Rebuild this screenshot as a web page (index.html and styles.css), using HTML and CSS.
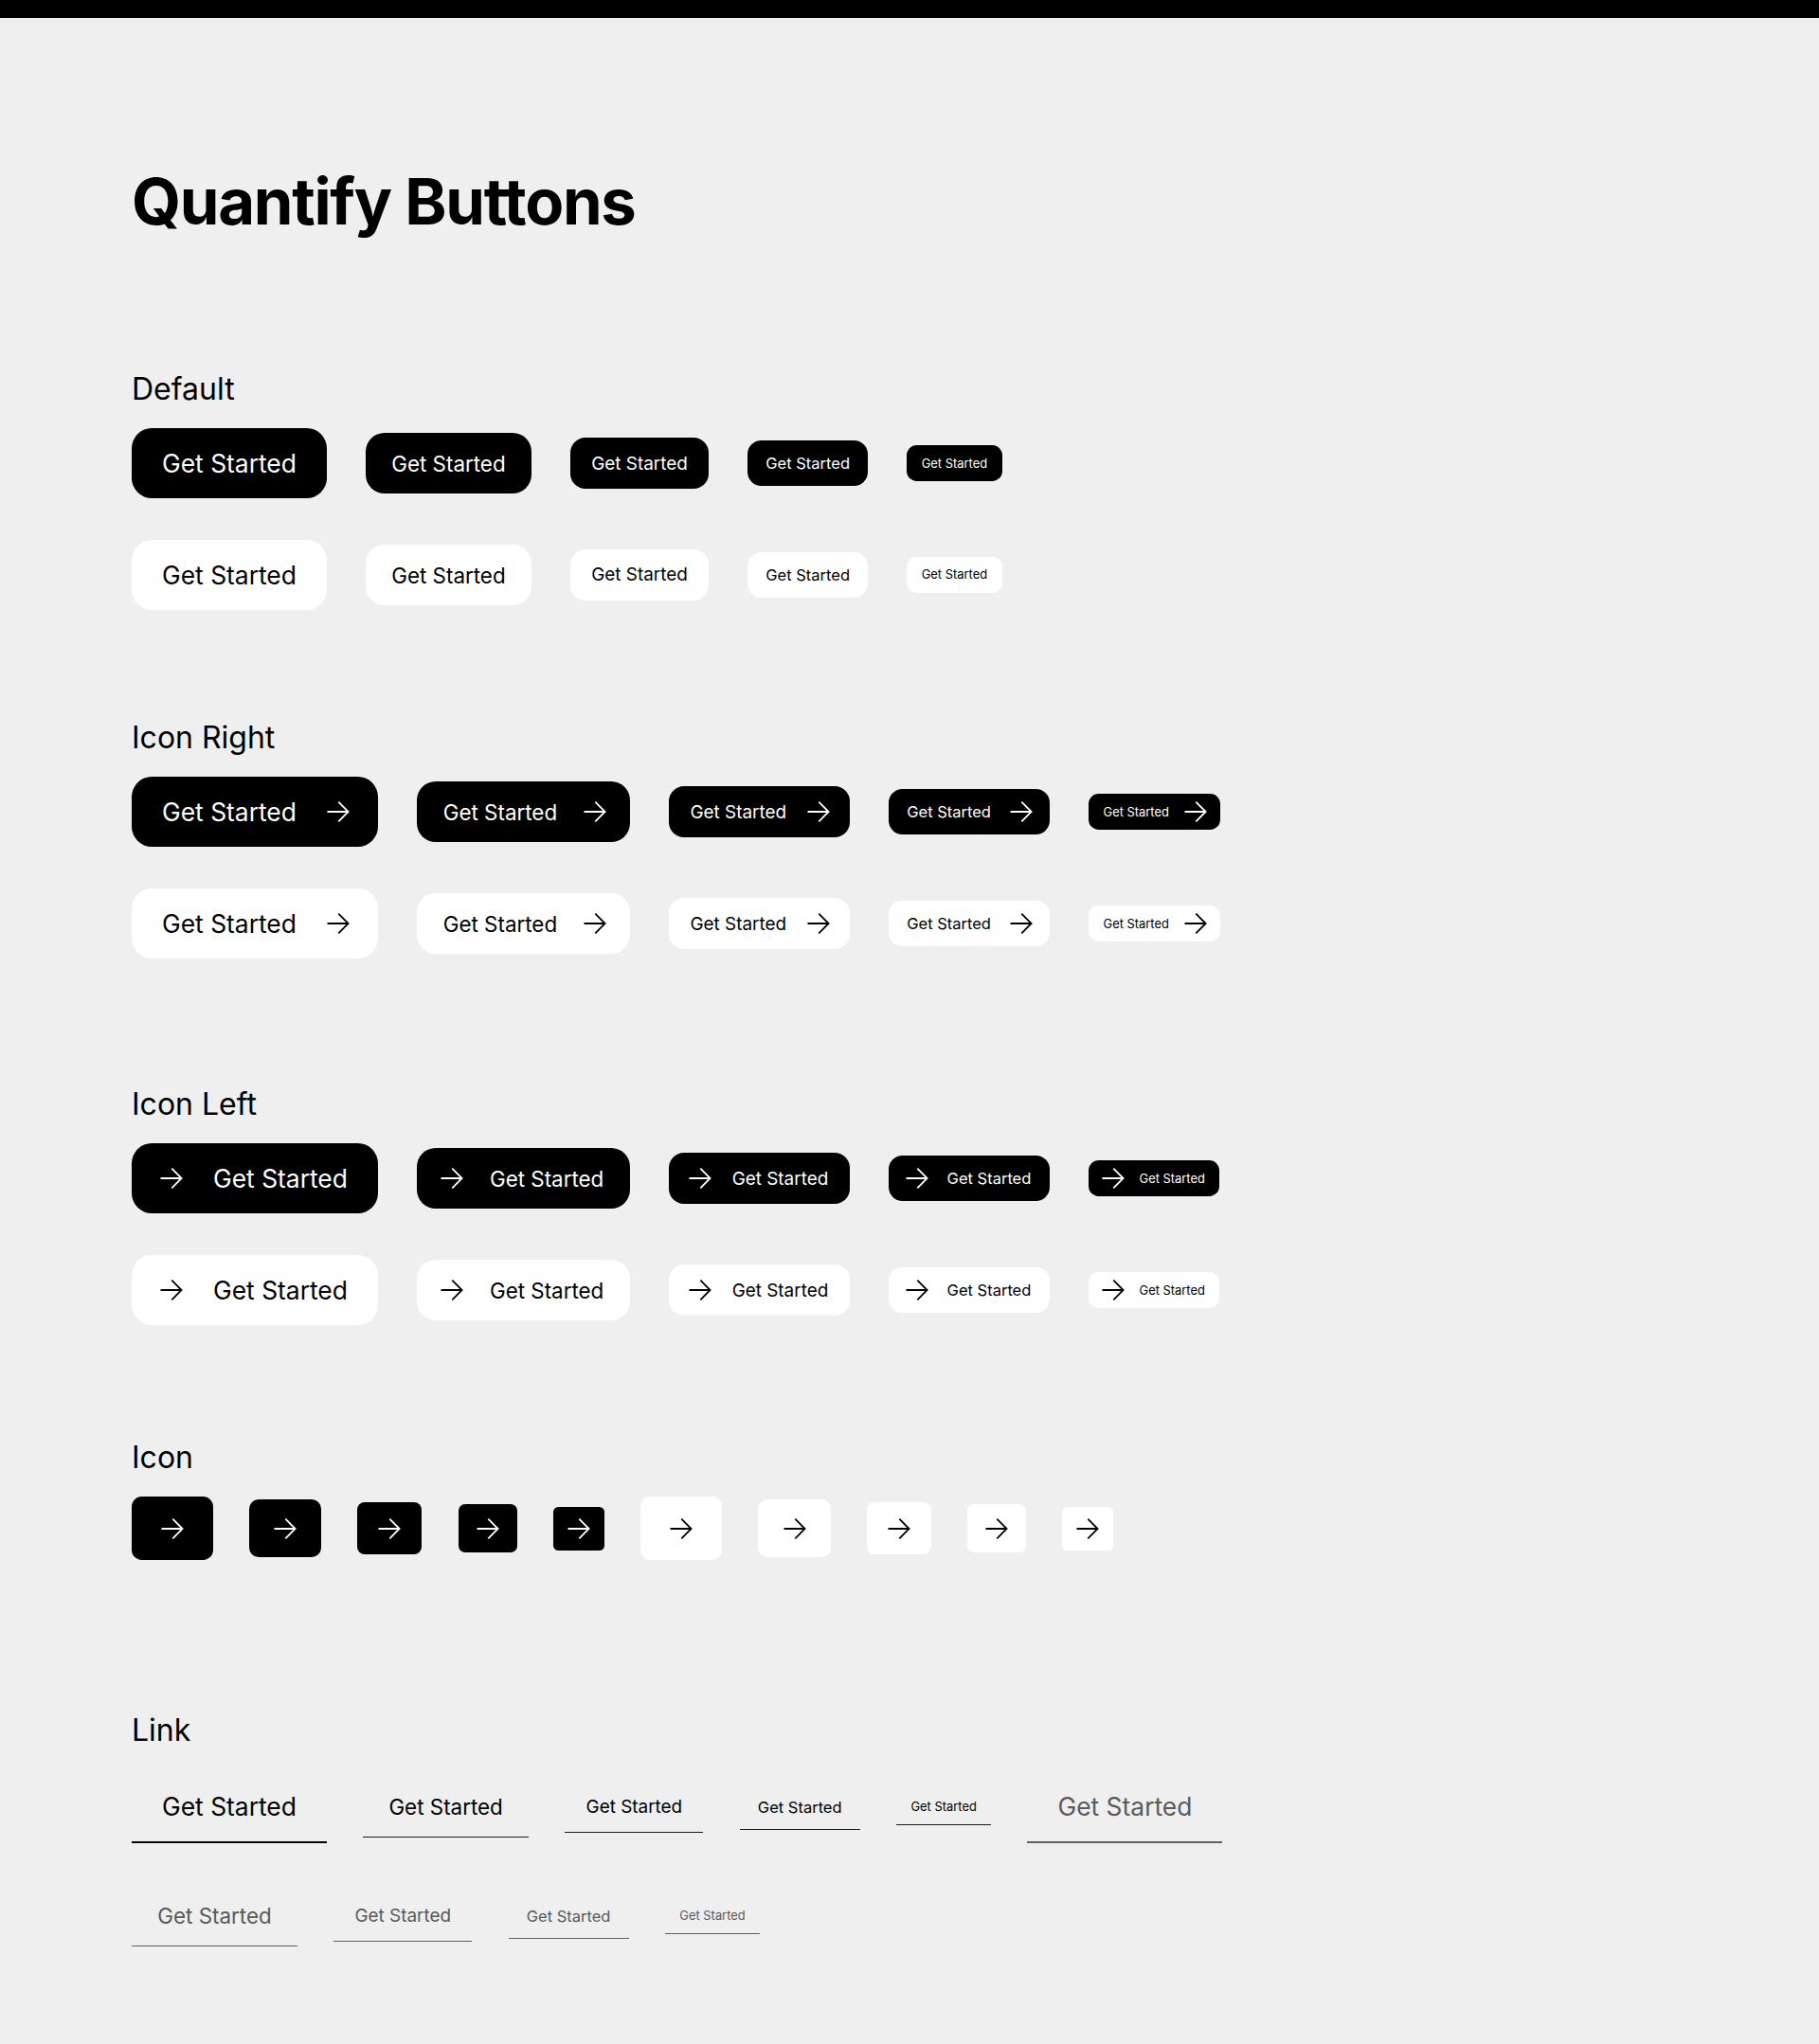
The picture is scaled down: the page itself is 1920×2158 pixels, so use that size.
FILE: index.html
```html
<!DOCTYPE html>
<html lang="en">
<head>
<meta charset="utf-8">
<title>Quantify Buttons</title>
<link rel="stylesheet" href="styles.css">
</head>
<body>
<div class="topbar"></div>
<main class="page">
  <h1 class="title">Quantify Buttons</h1>

  <section class="sec sec-default">
    <h2 class="sec-title">Default</h2>
    <div class="row">
      <span class="btn dark s1">Get Started</span>
      <span class="btn dark s2">Get Started</span>
      <span class="btn dark s3">Get Started</span>
      <span class="btn dark s4">Get Started</span>
      <span class="btn dark s5">Get Started</span>
    </div>
    <div class="row">
      <span class="btn light s1">Get Started</span>
      <span class="btn light s2">Get Started</span>
      <span class="btn light s3">Get Started</span>
      <span class="btn light s4">Get Started</span>
      <span class="btn light s5">Get Started</span>
    </div>
  </section>

  <section class="sec sec-right">
    <h2 class="sec-title">Icon Right</h2>
    <div class="row">
      <span class="btn dark ir s1">Get Started<svg class="arrow" viewBox="0 0 24 24"><path d="M0.5 12H22.6M12.3 1.6L22.6 12L12.3 22.4"/></svg></span>
      <span class="btn dark ir s2">Get Started<svg class="arrow" viewBox="0 0 24 24"><path d="M0.5 12H22.6M12.3 1.6L22.6 12L12.3 22.4"/></svg></span>
      <span class="btn dark ir s3">Get Started<svg class="arrow" viewBox="0 0 24 24"><path d="M0.5 12H22.6M12.3 1.6L22.6 12L12.3 22.4"/></svg></span>
      <span class="btn dark ir s4">Get Started<svg class="arrow" viewBox="0 0 24 24"><path d="M0.5 12H22.6M12.3 1.6L22.6 12L12.3 22.4"/></svg></span>
      <span class="btn dark ir s5">Get Started<svg class="arrow" viewBox="0 0 24 24"><path d="M0.5 12H22.6M12.3 1.6L22.6 12L12.3 22.4"/></svg></span>
    </div>
    <div class="row">
      <span class="btn light ir s1">Get Started<svg class="arrow" viewBox="0 0 24 24"><path d="M0.5 12H22.6M12.3 1.6L22.6 12L12.3 22.4"/></svg></span>
      <span class="btn light ir s2">Get Started<svg class="arrow" viewBox="0 0 24 24"><path d="M0.5 12H22.6M12.3 1.6L22.6 12L12.3 22.4"/></svg></span>
      <span class="btn light ir s3">Get Started<svg class="arrow" viewBox="0 0 24 24"><path d="M0.5 12H22.6M12.3 1.6L22.6 12L12.3 22.4"/></svg></span>
      <span class="btn light ir s4">Get Started<svg class="arrow" viewBox="0 0 24 24"><path d="M0.5 12H22.6M12.3 1.6L22.6 12L12.3 22.4"/></svg></span>
      <span class="btn light ir s5">Get Started<svg class="arrow" viewBox="0 0 24 24"><path d="M0.5 12H22.6M12.3 1.6L22.6 12L12.3 22.4"/></svg></span>
    </div>
  </section>

  <section class="sec sec-left">
    <h2 class="sec-title">Icon Left</h2>
    <div class="row">
      <span class="btn dark il s1"><svg class="arrow" viewBox="0 0 24 24"><path d="M0.5 12H22.6M12.3 1.6L22.6 12L12.3 22.4"/></svg>Get Started</span>
      <span class="btn dark il s2"><svg class="arrow" viewBox="0 0 24 24"><path d="M0.5 12H22.6M12.3 1.6L22.6 12L12.3 22.4"/></svg>Get Started</span>
      <span class="btn dark il s3"><svg class="arrow" viewBox="0 0 24 24"><path d="M0.5 12H22.6M12.3 1.6L22.6 12L12.3 22.4"/></svg>Get Started</span>
      <span class="btn dark il s4"><svg class="arrow" viewBox="0 0 24 24"><path d="M0.5 12H22.6M12.3 1.6L22.6 12L12.3 22.4"/></svg>Get Started</span>
      <span class="btn dark il s5"><svg class="arrow" viewBox="0 0 24 24"><path d="M0.5 12H22.6M12.3 1.6L22.6 12L12.3 22.4"/></svg>Get Started</span>
    </div>
    <div class="row">
      <span class="btn light il s1"><svg class="arrow" viewBox="0 0 24 24"><path d="M0.5 12H22.6M12.3 1.6L22.6 12L12.3 22.4"/></svg>Get Started</span>
      <span class="btn light il s2"><svg class="arrow" viewBox="0 0 24 24"><path d="M0.5 12H22.6M12.3 1.6L22.6 12L12.3 22.4"/></svg>Get Started</span>
      <span class="btn light il s3"><svg class="arrow" viewBox="0 0 24 24"><path d="M0.5 12H22.6M12.3 1.6L22.6 12L12.3 22.4"/></svg>Get Started</span>
      <span class="btn light il s4"><svg class="arrow" viewBox="0 0 24 24"><path d="M0.5 12H22.6M12.3 1.6L22.6 12L12.3 22.4"/></svg>Get Started</span>
      <span class="btn light il s5"><svg class="arrow" viewBox="0 0 24 24"><path d="M0.5 12H22.6M12.3 1.6L22.6 12L12.3 22.4"/></svg>Get Started</span>
    </div>
  </section>

  <section class="sec sec-icon">
    <h2 class="sec-title">Icon</h2>
    <div class="row row-icon">
      <span class="ibtn dark i1"><svg class="arrow" viewBox="0 0 24 24"><path d="M0.5 12H22.6M12.3 1.6L22.6 12L12.3 22.4"/></svg></span>
      <span class="ibtn dark i2"><svg class="arrow" viewBox="0 0 24 24"><path d="M0.5 12H22.6M12.3 1.6L22.6 12L12.3 22.4"/></svg></span>
      <span class="ibtn dark i3"><svg class="arrow" viewBox="0 0 24 24"><path d="M0.5 12H22.6M12.3 1.6L22.6 12L12.3 22.4"/></svg></span>
      <span class="ibtn dark i4"><svg class="arrow" viewBox="0 0 24 24"><path d="M0.5 12H22.6M12.3 1.6L22.6 12L12.3 22.4"/></svg></span>
      <span class="ibtn dark i5"><svg class="arrow" viewBox="0 0 24 24"><path d="M0.5 12H22.6M12.3 1.6L22.6 12L12.3 22.4"/></svg></span>
      <span class="ibtn light i1"><svg class="arrow" viewBox="0 0 24 24"><path d="M0.5 12H22.6M12.3 1.6L22.6 12L12.3 22.4"/></svg></span>
      <span class="ibtn light i2"><svg class="arrow" viewBox="0 0 24 24"><path d="M0.5 12H22.6M12.3 1.6L22.6 12L12.3 22.4"/></svg></span>
      <span class="ibtn light i3"><svg class="arrow" viewBox="0 0 24 24"><path d="M0.5 12H22.6M12.3 1.6L22.6 12L12.3 22.4"/></svg></span>
      <span class="ibtn light i4"><svg class="arrow" viewBox="0 0 24 24"><path d="M0.5 12H22.6M12.3 1.6L22.6 12L12.3 22.4"/></svg></span>
      <span class="ibtn light i5"><svg class="arrow" viewBox="0 0 24 24"><path d="M0.5 12H22.6M12.3 1.6L22.6 12L12.3 22.4"/></svg></span>
    </div>
  </section>

  <section class="sec sec-link">
    <h2 class="sec-title">Link</h2>
    <div class="row row-link">
      <a class="link s1">Get Started</a>
      <a class="link s2">Get Started</a>
      <a class="link s3">Get Started</a>
      <a class="link s4">Get Started</a>
      <a class="link s5">Get Started</a>
      <a class="link muted s1">Get Started</a>
    </div>
    <div class="row row-link row-link2">
      <a class="link muted s2">Get Started</a>
      <a class="link muted s3">Get Started</a>
      <a class="link muted s4">Get Started</a>
      <a class="link muted s5">Get Started</a>
    </div>
  </section>
</main>
</body>
</html>
```

FILE: styles.css
```css
html, body {
  margin: 0;
  padding: 0;
}

body {
  background: #efefef;
  font-family: Inter, "Noto Sans", sans-serif;
  color: #000;
  min-height: 2158px;
}

.topbar {
  height: 19px;
  background: #000;
}

.page {
  padding: 0 0 0 139px;
}

.title {
  margin: 153px 0 0;
  font-size: 67px;
  line-height: 82px;
  font-weight: 700;
  letter-spacing: -1.3px;
}

.sec-title {
  margin: 0 0 22px;
  font-size: 32px;
  line-height: 38px;
  font-weight: 400;
}

.sec-default { margin-top: 137.7px; }
.sec-right { margin-top: 115.4px; }
.sec-left { margin-top: 134.4px; }
.sec-icon { margin-top: 120.4px; }
.sec-link { margin-top: 160.9px; }

.sec-link .sec-title { margin-bottom: 24.5px; }

.row {
  display: flex;
  align-items: center;
  gap: 41px;
}

.row + .row {
  margin-top: 43.33px;
}

.row-icon { gap: 38.1px; }
.row-link { gap: 38.2px; }
.row-link + .row-link2 { margin-top: 45.5px; }

.btn, .ibtn, .link {
  display: inline-flex;
  align-items: center;
  justify-content: center;
  box-sizing: border-box;
  white-space: nowrap;
  font-weight: 400;
  flex: none;
}

.dark { background: #000; color: #fff; }
.light { background: #fff; color: #000; }

.arrow {
  width: 24px;
  height: 24px;
  flex: none;
  fill: none;
  stroke: currentColor;
  stroke-width: 1.8;
  stroke-linecap: butt;
  stroke-linejoin: miter;
}

/* sizes */
.s1 { height: 74.67px; padding: 0 32px; font-size: 26.4px; border-radius: 21.33px; }
.s2 { height: 64px; padding: 0 27.3px; font-size: 22.4px; border-radius: 20px; }
.s3 { height: 53.33px; padding: 0 22.3px; font-size: 18.9px; border-radius: 16px; }
.s4 { height: 48px; padding: 0 19.2px; font-size: 16.5px; border-radius: 14.67px; }
.s5 { height: 37.33px; padding: 0 15.5px; font-size: 12.9px; border-radius: 10.67px; }

/* icon right */
.ir.s1 { gap: 32px; padding-right: 30.5px; }
.ir.s2 { gap: 27.5px; padding-right: 25.5px; }
.ir.s3 { gap: 22px; padding-right: 21px; }
.ir.s4 { gap: 19.8px; padding-right: 18.3px; }
.ir.s5 { gap: 15.8px; padding-right: 14.2px; }

/* icon left */
.il.s1 { gap: 32px; padding-left: 30px; }
.il.s2 { gap: 27.5px; padding-left: 25.5px; }
.il.s3 { gap: 22px; padding-left: 21px; }
.il.s4 { gap: 19.8px; padding-left: 18.3px; }
.il.s5 { gap: 15.8px; padding-left: 14.2px; }

/* icon only */
.ibtn { padding: 0; }
.i1 { width: 86px; height: 67.7px; border-radius: 10.67px; }
.i2 { width: 76.3px; height: 61.3px; border-radius: 10px; }
.i3 { width: 68px; height: 55.7px; border-radius: 8px; }
.i4 { width: 62.5px; height: 51.7px; border-radius: 7px; }
.i5 { width: 54px; height: 46px; border-radius: 5.33px; }

/* links */
.link {
  color: #000;
  background: transparent;
  border-radius: 0;
  border-bottom: 1.33px solid #1a1a1a;
  text-decoration: none;
}

.link.s1 { border-bottom-width: 2px; border-bottom-color: #000; }

.link.muted {
  color: #5a5a5a;
  border-bottom-color: #5f5f5f;
}
```
